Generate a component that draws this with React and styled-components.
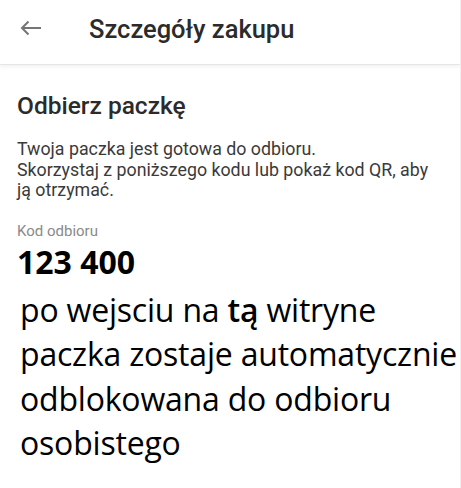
import React from "react";
import styled, { createGlobalStyle } from "styled-components";

const Global = createGlobalStyle`
  html, body { margin: 0; padding: 0; background: #fff; }
  body { font-family: Roboto, "Noto Sans", sans-serif; }
`;

const Page = styled.div`
  width: 461px;
  height: 488px;
  background: #fff;
  border-right: 1px solid #f0f0f0;
  box-sizing: border-box;
  overflow: hidden;
`;

const Header = styled.header`
  height: 65px;
  display: flex;
  align-items: center;
  padding-left: 20px;
  border-bottom: 1px solid #e6e6e6;
  box-shadow: 0 2px 4px rgba(0, 0, 0, 0.06);
  box-sizing: border-box;
`;

const BackButton = styled.button`
  border: 0;
  background: none;
  padding: 0;
  width: 22px;
  height: 22px;
  display: flex;
  align-items: center;
  justify-content: center;
  color: #757575;
  margin-top: -8px;
`;

const Title = styled.h1`
  margin: -6px 0 0 47px;
  font-family: Roboto, sans-serif;
  font-weight: 500;
  font-size: 25.5px;
  color: #2b2b2b;
`;

const Content = styled.main`
  padding: 26px 0 0 17px;
  display: flex;
  flex-direction: column;
`;

const Heading = styled.h2`
  margin: 0;
  font-family: Roboto, sans-serif;
  font-weight: 500;
  font-size: 24.5px;
  line-height: 30px;
  color: #2b2b2b;
`;

const Body = styled.p`
  margin: 18px 0 0;
  font-family: Roboto, sans-serif;
  font-size: 17.8px;
  line-height: 20.5px;
  color: #3a3a3a;
  white-space: nowrap;
`;

const Label = styled.div`
  margin-top: 21px;
  font-family: Roboto, sans-serif;
  font-size: 15px;
  line-height: 18px;
  color: #8a8a8a;
`;

const Code = styled.div`
  margin-top: 2px;
  font-family: "Open Sans", "Noto Sans", sans-serif;
  font-weight: 700;
  font-size: 32px;
  line-height: 40px;
  color: #000;
`;

const Note = styled.p`
  margin: 6px 0 0 3px;
  font-family: "Open Sans", "Noto Sans", sans-serif;
  font-size: 32px;
  line-height: 44.5px;
  color: #000;
  white-space: nowrap;
  letter-spacing: -0.2px;
`;

const Strong = styled.span`
  font-weight: 600;
`;

export default function App() {
  return (
    <Page>
      <Global />
      <Header>
        <BackButton aria-label="Wstecz">
          <svg width="22" height="16" viewBox="0 0 22 16" fill="none" stroke="currentColor" strokeWidth="2">
            <path d="M21 8H2.5" />
            <path d="M8.5 1.5L2 8l6.5 6.5" />
          </svg>
        </BackButton>
        <Title>Szczegóły zakupu</Title>
      </Header>
      <Content>
        <Heading>Odbierz paczkę</Heading>
        <Body>
          Twoja paczka jest gotowa do odbioru.
          <br />
          Skorzystaj z poniższego kodu lub pokaż kod QR, aby
          <br />
          ją otrzymać.
        </Body>
        <Label>Kod odbioru</Label>
        <Code>123 400</Code>
        <Note>
          po wejsciu na <Strong>tą</Strong> witryne
          <br />
          paczka zostaje automatycznie
          <br />
          odblokowana do odbioru
          <br />
          osobistego
        </Note>
      </Content>
    </Page>
  );
}
